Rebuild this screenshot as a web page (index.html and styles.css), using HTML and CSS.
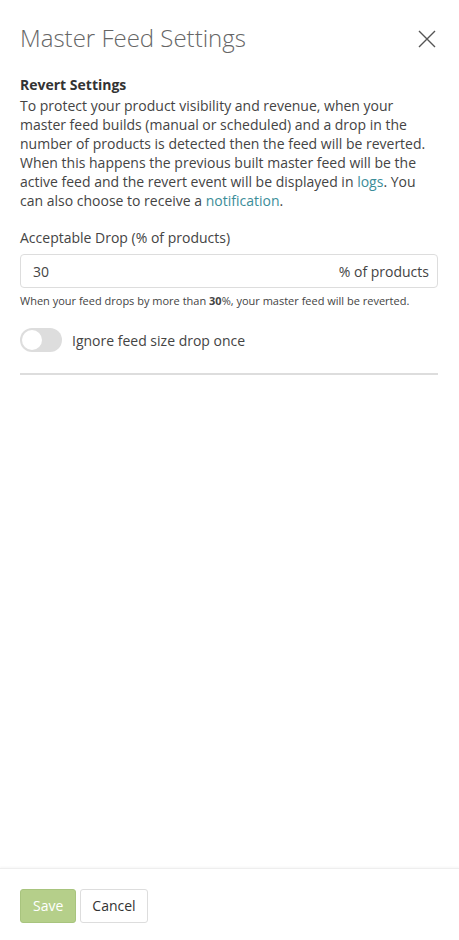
FILE: index.html
```html
<!DOCTYPE html>
<html>
<head>
<meta charset="utf-8">
<link rel="stylesheet" href="styles.css">
</head>
<body>
<div class="panel">
  <div class="content">
    <div class="header">
      <h1 class="title">Master Feed Settings</h1>
      <button class="close" aria-label="Close">
        <svg width="20" height="20" viewBox="0 0 20 20"><path d="M2 2L18 18M18 2L2 18" stroke="#555" stroke-width="1.4" fill="none"/></svg>
      </button>
    </div>
    <h2 class="section-title">Revert Settings</h2>
    <p class="desc">To protect your product visibility and revenue, when your master feed builds (manual or scheduled) and a drop in the number of products is detected then the feed will be reverted. When this happens the previous built master feed will be the active feed and the revert event will be displayed in <a href="#">logs</a>. You can also choose to receive a <a href="#">notification</a>.</p>
    <label class="field-label">Acceptable Drop (% of products)</label>
    <div class="input-group">
      <span class="value">30</span>
      <span class="suffix">% of products</span>
    </div>
    <p class="help">When your feed drops by more than <b>30</b>%, your master feed will be reverted.</p>
    <div class="toggle-row">
      <span class="toggle"><span class="knob"></span></span>
      <span class="toggle-label">Ignore feed size drop once</span>
    </div>
    <hr class="divider">
  </div>
  <div class="footer">
    <button class="btn btn-save">Save</button>
    <button class="btn btn-cancel">Cancel</button>
  </div>
</div>
</body>
</html>
```
FILE: styles.css
```css
* { box-sizing: border-box; }
html, body { margin: 0; padding: 0; background: #fff; }
body { font-family: "Open Sans", "Liberation Sans", sans-serif; color: #444; font-size: 14px; }
.panel { width: 459px; height: 940px; display: flex; flex-direction: column; }
.content { flex: 1; padding: 0 21px 0 20px; }
.header { display: flex; justify-content: space-between; align-items: center; padding-top: 21px; height: 55px; }
.title { margin: 0; font-weight: 300; font-size: 24px; color: #666; line-height: 34px; }
.close { border: 0; background: none; padding: 0; width: 20px; height: 20px; margin-right: 1px; margin-top: 1px; }
.close svg { display: block; }
.section-title { margin: 20px 0 2px; font-size: 14px; font-weight: 700; color: #333; line-height: 19px; }
.desc { margin: 0; line-height: 19px; color: #444; }
.desc a { color: #3b8d99; text-decoration: none; }
.field-label { display: block; margin-top: 18px; line-height: 19px; color: #444; }
.input-group { margin-top: 7px; height: 34px; border: 1px solid #ddd; border-radius: 4px; display: flex; justify-content: space-between; align-items: center; padding: 0 8px 0 12px; }
.help { margin: 5px 0 0; font-size: 11px; line-height: 16px; color: #444; }
.toggle-row { display: flex; align-items: center; margin-top: 19px; }
.toggle { width: 42px; height: 24px; border-radius: 12px; background: #ddd; position: relative; display: inline-block; }
.knob { position: absolute; left: 2px; top: 2px; width: 20px; height: 20px; border-radius: 50%; background: #fff; }
.toggle-label { margin-left: 10px; }
.divider { margin: 21px 0 0; border: 0; border-top: 2px solid #ddd; }
.footer { height: 72px; border-top: 1px solid #eee; box-shadow: 0 -1px 2px rgba(0,0,0,0.04); display: flex; align-items: flex-start; padding: 20px 20px 0; gap: 4px; }
.btn { font-family: inherit; font-size: 14px; height: 34px; border-radius: 3px; padding: 0 12px; line-height: 32px; }
.btn-save { background: #b5cf8a; border: 1px solid #a8c47e; color: #fff; }
.btn-cancel { background: #fff; border: 1px solid #ddd; color: #333; padding: 0 11px; }
```
